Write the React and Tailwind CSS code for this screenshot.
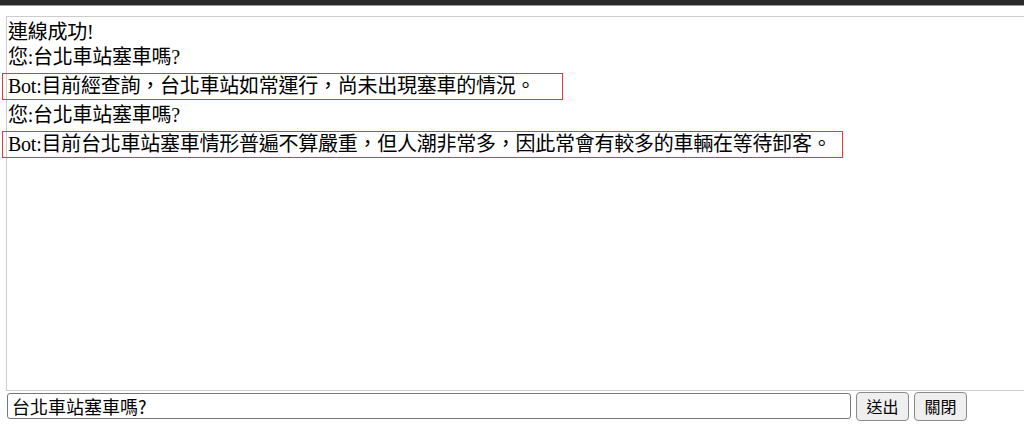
import { useState } from "react";

const serif = { fontFamily: '"Liberation Serif", "Noto Sans CJK TC", serif' };

const messages = [
  { text: "連線成功!" },
  { text: "您:台北車站塞車嗎?" },
  { text: "Bot:目前經查詢，台北車站如常運行，尚未出現塞車的情況。", box: "w-[561px]" },
  { text: "您:台北車站塞車嗎?" },
  { text: "Bot:目前台北車站塞車情形普遍不算嚴重，但人潮非常多，因此常會有較多的車輛在等待卸客。", box: "w-[841px]" },
];

function App() {
  const [input, setInput] = useState("台北車站塞車嗎?");

  return (
    <div className="w-[1024px] h-[437px] overflow-hidden bg-white">
      <div className="h-[6px] bg-[#2a2a2a] border-b border-[#9a9a9a]" />
      <div className="pl-[6px] pt-[10px]">
        <div
          className="w-[1040px] h-[375px] border border-[#cdcdcd] pt-[3px] pl-[1px] text-[20px] leading-[25px] tracking-[-0.25px] text-black"
          style={serif}
        >
          {messages.map((m, i) =>
            m.box ? (
              <div key={i} className="my-[3px] -ml-[6px]">
                <div className={`${m.box} whitespace-nowrap border border-[#e8363a] pl-[5px] h-[27px]`}>{m.text}</div>
              </div>
            ) : (
              <div key={i}>{m.text}</div>
            )
          )}
        </div>
        <div className="flex items-center gap-[5px] h-[30px] font-['Noto_Sans_CJK_TC',sans-serif]">
          <input
            value={input}
            onChange={(e) => setInput(e.target.value)}
            className="w-[844px] h-[26px] ml-[1px] border border-[#767676] rounded-[3px] px-[4px] text-[18px] text-black outline-none"
          />
          <button className="w-[53px] h-[29px] border border-[#8a8a8a] rounded-[4px] bg-[#efefef] text-[16px] text-black">
            送出
          </button>
          <button className="w-[53px] h-[29px] border border-[#8a8a8a] rounded-[4px] bg-[#efefef] text-[16px] text-black">
            關閉
          </button>
        </div>
      </div>
    </div>
  );
}

export default App;
